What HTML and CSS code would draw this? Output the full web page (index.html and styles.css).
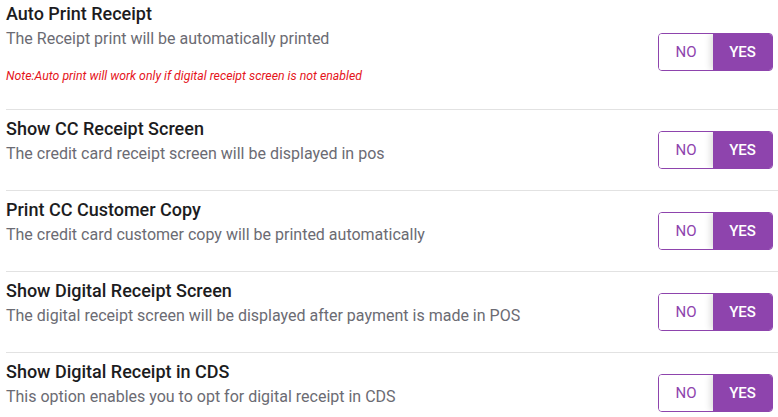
FILE: index.html
```html
<!DOCTYPE html>
<html>
<head>
<meta charset="utf-8">
<link rel="stylesheet" href="styles.css">
</head>
<body>
<div class="list">
  <div class="row">
    <div class="info">
      <div class="title">Auto Print Receipt</div>
      <div class="desc">The Receipt print will be automatically printed</div>
      <div class="note">Note:Auto print will work only if digital receipt screen is not enabled</div>
    </div>
    <div class="toggle"><span class="opt">NO</span><span class="opt on">YES</span></div>
  </div>
  <div class="row">
    <div class="info">
      <div class="title">Show CC Receipt Screen</div>
      <div class="desc">The credit card receipt screen will be displayed in pos</div>
    </div>
    <div class="toggle"><span class="opt">NO</span><span class="opt on">YES</span></div>
  </div>
  <div class="row">
    <div class="info">
      <div class="title">Print CC Customer Copy</div>
      <div class="desc">The credit card customer copy will be printed automatically</div>
    </div>
    <div class="toggle"><span class="opt">NO</span><span class="opt on">YES</span></div>
  </div>
  <div class="row">
    <div class="info">
      <div class="title">Show Digital Receipt Screen</div>
      <div class="desc">The digital receipt screen will be displayed after payment is made in POS</div>
    </div>
    <div class="toggle"><span class="opt">NO</span><span class="opt on">YES</span></div>
  </div>
  <div class="row">
    <div class="info">
      <div class="title">Show Digital Receipt in CDS</div>
      <div class="desc">This option enables you to opt for digital receipt in CDS</div>
    </div>
    <div class="toggle"><span class="opt">NO</span><span class="opt on">YES</span></div>
  </div>
</div>
</body>
</html>
```
FILE: styles.css
```css
html, body {
  margin: 0;
  padding: 0;
  background: #ffffff;
  overflow: hidden;
}
body {
  font-family: Roboto, "Liberation Sans", sans-serif;
}
.list {
  margin-top: -5px;
  padding-left: 6px;
}
.row {
  display: flex;
  align-items: center;
  justify-content: space-between;
  padding-right: 5px;
  border-bottom: 1px solid #e2e2e2;
}
.info {
  padding: 9px 0 26px;
}
.title {
  font-size: 18px;
  line-height: 20px;
  font-weight: 500;
  color: #1c1c1e;
}
.desc {
  margin-top: 5px;
  font-size: 16px;
  line-height: 20px;
  color: #6b6b73;
}
.note {
  margin-top: 20px;
  font-size: 12.3px;
  line-height: 14px;
  font-style: italic;
  color: #e5141b;
}
.toggle {
  display: flex;
  width: 115px;
  height: 38px;
  box-sizing: border-box;
  border: 1px solid #8e44ad;
  border-radius: 4px;
  overflow: hidden;
}
.opt {
  display: flex;
  align-items: center;
  justify-content: center;
  font-size: 15px;
  font-weight: 400;
  color: #8e44ad;
  width: 54px;
  background: #ffffff;
}
.opt.on {
  flex: 1;
  background: #8e44ad;
  color: #ffffff;
  font-weight: 500;
  box-shadow: -3px 0 6px rgba(0, 0, 0, 0.12);
}
```
